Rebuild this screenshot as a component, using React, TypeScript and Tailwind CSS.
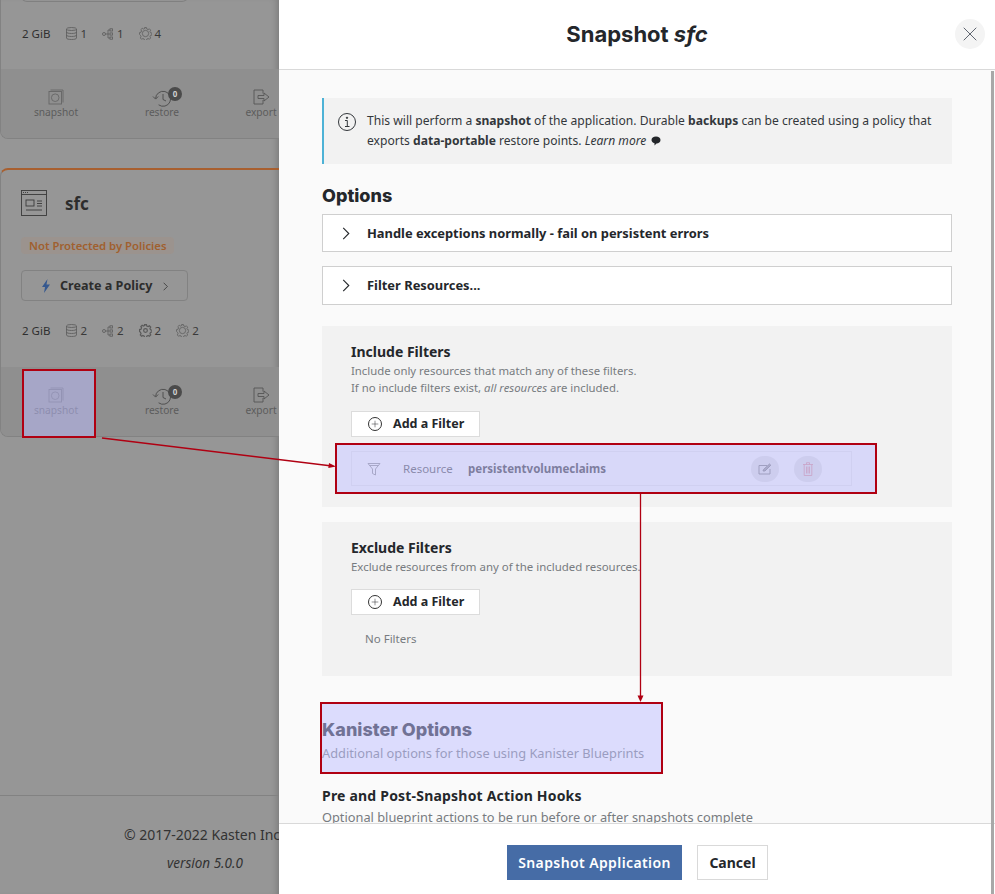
import { Plus, X } from "lucide-react";

const stroke = { fill: "none", stroke: "currentColor", strokeWidth: 0.9 };

function SnapshotIcon() {
  return (
    <svg width="16" height="16" viewBox="0 0 16 16" {...stroke}>
      <path d="M2.500 1h12.500v12.500" />
      <rect x="1" y="2.500" width="12.500" height="12.500" />
      <circle cx="7.200" cy="8.700" r="3.800" />
    </svg>
  );
}

function RestoreIcon() {
  return (
    <svg width="20" height="18" viewBox="0 0 20 18" {...stroke}>
      <path d="M3.600 9.500a7.500 7.500 0 1 1 3 6.300" />
      <path d="M1 7.500l2.600 2.600 2.600-2.600" />
      <path d="M11 5v5.500l3 1.500" />
    </svg>
  );
}

function ExportIcon() {
  return (
    <svg width="17" height="16" viewBox="0 0 17 16" {...stroke}>
      <path d="M10 4.500V1H1v14h9v-4" />
      <path d="M5 6.500h6V4l5 4-5 4V9.500H5z" />
    </svg>
  );
}

function DbIcon() {
  return (
    <svg width="11" height="13" viewBox="0 0 11 13" {...stroke} strokeWidth={0.8}>
      <path d="M.5 2v9c0 1 2.200 1.500 5 1.500s5-.5 5-1.500V2" />
      <ellipse cx="5.500" cy="2" rx="5" ry="1.500" />
      <path d="M.5 5c0 1 2.200 1.500 5 1.500s5-.5 5-1.500M.5 8c0 1 2.200 1.500 5 1.500s5-.5 5-1.500" />
    </svg>
  );
}

function TreeIcon() {
  return (
    <svg width="12" height="12" viewBox="0 0 12 12" {...stroke} strokeWidth={0.8}>
      <circle cx="2" cy="6" r="1.500" />
      <path d="M3.500 6h4M6 2v8M6 2h2M6 10h2" />
      <rect x="8" y=".8" width="2.400" height="2.200" />
      <rect x="8" y="4.900" width="2.400" height="2.200" />
      <rect x="8" y="9" width="2.400" height="2.200" />
    </svg>
  );
}

function GearIcon({ dark }: { dark?: boolean }) {
  return (
    <svg width="13" height="13" viewBox="0 0 14 14" {...stroke} strokeWidth={dark ? 1.3 : 0.8}>
      <path d="M6 .6h2l.4 1.600 1.400.6 1.400-.8 1.400 1.400-.8 1.400.6 1.400 1.600.4v2l-1.600.4-.6 1.400.8 1.400-1.400 1.400-1.400-.8-1.400.6-.4 1.600H6l-.4-1.600-1.400-.6-1.400.8-1.400-1.400.8-1.400-.6-1.400L.6 8V6l1.600-.4.6-1.400L2 2.800 3.400 1.400l1.400.8 1.400-.6z" />
      <circle cx="7" cy="7" r={dark ? 2 : 3.400} />
    </svg>
  );
}

function AppIcon() {
  return (
    <svg width="26" height="26" viewBox="0 0 26 26" {...stroke}>
      <rect x=".5" y=".5" width="25" height="25" />
      <path d="M.5 4.500h25M2 2.500h1M4 2.500h1M6 2.500h1" />
      <rect x="5" y="10" width="8" height="6" />
      <path d="M16 11h5M16 13.500h5M16 16h5M5 20h16" />
    </svg>
  );
}

function Chevron({ w, h }: { w: number; h: number }) {
  return (
    <svg width={w} height={h} viewBox="0 0 8 14" fill="none" stroke="currentColor" strokeWidth="1.200" className="shrink-0">
      <path d="M1 1l6 6-6 6" />
    </svg>
  );
}

function Stats({ items }: { items: { icon: React.ReactNode; n: number }[] }) {
  return (
    <div className="flex items-center text-[11.500px] text-[#2f2f2f]">
      <span className="mr-[16px]">2 GiB</span>
      {items.map((item, i) => (
        <span key={i} className="mr-[15px] flex items-center gap-[3px] text-[#3a3a3a]">
          <span className="flex text-[#5a5a5a]">{item.icon}</span>
          <span>{item.n}</span>
        </span>
      ))}
    </div>
  );
}

function ActionStrip() {
  return (
    <div className="flex h-[69px] bg-[#8f8f8f] text-[10.200px] text-[#5c5c5c]">
      <div className="flex w-[110px] flex-col items-center pt-[20px]">
        <span className="text-[#666]"><SnapshotIcon /></span>
        <span>snapshot</span>
      </div>
      <div className="relative flex w-[102px] flex-col items-center pt-[20px]">
        <span className="text-[#4a4a4a]"><RestoreIcon /></span>
        <span className="-mt-[2px]">restore</span>
        <span className="absolute left-[57px] top-[18px] flex h-[14px] w-[14px] items-center justify-center rounded-full bg-[#4b4b4b] text-[8px] font-bold text-[#cfcfcf]">
          0
        </span>
      </div>
      <div className="flex w-[67px] flex-col items-center pl-[29px] pt-[20px]">
        <span className="text-[#555]"><ExportIcon /></span>
        <span>export</span>
      </div>
    </div>
  );
}

function Background() {
  return (
    <div className="flex h-full w-[279px] shrink-0 flex-col overflow-hidden bg-[#969696] shadow-[inset_-6px_0_6px_-4px_rgba(0,0,0,0.18)]">
      {/* first card, cut off by the top of the window */}
      <div className="-mt-[4px] w-[300px] overflow-hidden rounded-bl-lg border-b border-l border-[#828282]">
        <div className="ml-[20px] h-[6px] w-[167px] rounded-b-md border border-t-0 border-[#808080]" />
        <div className="flex h-[67px] items-center pb-[4px] pl-[21px]">
          <Stats
            items={[
              { icon: <DbIcon />, n: 1 },
              { icon: <TreeIcon />, n: 1 },
              { icon: <GearIcon />, n: 4 },
            ]}
          />
        </div>
        <ActionStrip />
      </div>

      {/* sfc card */}
      <div className="mt-[29px] w-[300px] overflow-hidden rounded-tl-lg rounded-bl-lg border-b border-l border-t-2 border-[#828282] border-t-[#a85f2f]">
        <div className="pl-[20px] pt-[20px] text-[#3a3a3a]">
          <div className="flex items-center gap-[18px]">
            <AppIcon />
            <span className="pt-[1px] text-[17px] font-bold leading-[25px] text-[#2d2d2d]">sfc</span>
          </div>
          <div className="mt-[21px] w-fit rounded-sm bg-[#9b938e] px-[8px] text-[11.300px] font-semibold leading-[17px] text-[#a0602f]">
            Not Protected by Policies
          </div>
          <div className="mt-[16px] flex h-[31px] w-[167px] items-center rounded border border-[#828282] pl-[19px] pt-[1px] text-[12.600px] font-bold text-[#2d2d2d]">
            <svg width="10" height="14" viewBox="0 0 10 14" fill="#35588f" className="shrink-0">
              <path d="M6.500 0L1 8h3L3 14l6-8.500H5.500z" />
            </svg>
            <span className="ml-[9px]">Create a Policy</span>
            <span className="ml-[10px]"><Chevron w={5} h={9} /></span>
          </div>
          <div className="mb-[23px] ml-px mt-[21px] h-[22px]">
            <Stats
              items={[
                { icon: <DbIcon />, n: 2 },
                { icon: <TreeIcon />, n: 2 },
                { icon: <GearIcon dark />, n: 2 },
                { icon: <GearIcon />, n: 2 },
              ]}
            />
          </div>
        </div>
        <ActionStrip />
      </div>

      {/* page footer */}
      <div className="mt-auto h-[99px] w-[300px] border-t border-[#828282] pl-[124px] pt-[29px] text-[#333]">
        <div className="whitespace-nowrap text-[14px] leading-[20px]">© 2017-2022 Kasten Inc.</div>
        <div className="ml-[43px] mt-[8px] whitespace-nowrap text-[13.500px] italic leading-[20px]">version 5.0.0</div>
      </div>
    </div>
  );
}

function Accordion({ label, h }: { label: string; h: string }) {
  return (
    <div className={`flex ${h} items-center border border-[#cfcfcf] bg-white pl-[19px] text-[12.900px] font-bold text-[#24272b]`}>
      <Chevron w={8} h={13} />
      <span className="ml-[17px] pt-px">{label}</span>
    </div>
  );
}

function AddFilter() {
  return (
    <button className="flex h-[26px] w-[129px] items-center border border-[#dcdcdc] bg-white pl-[16px] text-[12.500px] font-bold text-[#24272b]">
      <span className="flex h-[14px] w-[14px] items-center justify-center rounded-full border border-[#333]">
        <Plus className="h-[10px] w-[10px]" strokeWidth={1.2} />
      </span>
      <span className="ml-[11px]">Add a Filter</span>
    </button>
  );
}

function FilterRow() {
  return (
    <div className="mt-[14px] flex h-[35px] w-[501px] items-center border border-[#e2e2e2] pl-[15px] text-[11.500px] text-[#555]">
      <svg width="14" height="14" viewBox="0 0 14 14" fill="none" stroke="#888" strokeWidth="0.9" className="shrink-0">
        <path d="M1 1.500h12L8.500 7v6l-3-1.500V7z" />
        <path d="M2.500 3.500h9" />
      </svg>
      <span className="ml-[22px] w-[50px] whitespace-nowrap">Resource</span>
      <span className="ml-[15px] w-[138px] whitespace-nowrap font-bold text-[#3d3d3d]">persistentvolumeclaims</span>
      <span className="ml-[145px] flex h-[26px] w-[28px] items-center justify-center rounded-full bg-[#dcdcdc]">
        <svg width="14" height="12" viewBox="0 0 14 12" fill="none" stroke="#777" strokeWidth="0.9">
          <path d="M9 2.500H1v8.500h11V6" />
          <path d="M5 8l.5-1.500L11.500 1l1.300 1.200L7 8z" fill="#999" />
        </svg>
      </span>
      <span className="ml-[15px] flex h-[26px] w-[28px] items-center justify-center rounded-full bg-[#dcdcdc]">
        <svg width="10" height="14" viewBox="0 0 10 14" fill="none" stroke="#d6868d" strokeWidth="0.8">
          <path d="M0 2.500h10M3.500 2.500V.7h3v1.800M1.200 2.500v11h7.600v-11M3.500 4.500v7M5 4.500v7M6.500 4.500v7" />
        </svg>
      </span>
    </div>
  );
}

function Modal() {
  return (
    <div className="relative flex h-full flex-1 flex-col bg-white text-[#24272b]">
      <header className="relative flex h-[70px] shrink-0 items-center justify-center border-b border-[#d9d9d9]">
        <h1 className="font-['Inter'] text-[22px] font-bold text-[#24272b]">
          Snapshot <em className="font-bold">sfc</em>
        </h1>
        <span className="absolute right-[10px] top-[19px] flex h-[30px] w-[30px] items-center justify-center rounded-full bg-[#f4f4f4] text-[#5f6570]">
          <X className="h-[24px] w-[24px]" strokeWidth={1} />
        </span>
      </header>

      <div className="min-h-0 flex-1 overflow-hidden bg-[#fafafa] pl-[43px] pr-[43px] pt-[28px]">
        <div className="flex h-[66px] items-start border-l-2 border-[#4db2d6] bg-[#f2f2f2] pl-[13px] pt-[13px] text-[12.100px] leading-[20px] text-[#33373b]">
          <svg width="20" height="20" viewBox="0 0 20 20" fill="none" stroke="#33373b" className="mt-[1px] shrink-0">
            <circle cx="10" cy="10" r="8.500" />
            <path d="M8 8.500h2.300v5.500M8 14.500h4.500" />
            <circle cx="10" cy="5.800" r=".7" fill="#33373b" />
          </svg>
          <p className="ml-[10px]">
            This will perform a <b>snapshot</b> of the application. Durable <b>backups</b> can be created using a policy that exports <b>data-portable</b> restore points. <i>Learn more</i>{" "}
            <svg width="10" height="10" viewBox="0 0 10 10" fill="#24272b" className="ml-[2px] inline-block align-[-1px]">
              <path d="M5 .5c2.700 0 4.500 1.500 4.500 3.500S7.700 7.500 5.500 7.500L3.500 9.500V7.200C1.700 6.800.5 5.500.5 4 .5 2 2.300.5 5 .5z" />
            </svg>
          </p>
        </div>

        <h2 className="mt-[20px] font-['Inter'] text-[18px] font-extrabold leading-[24px]">Options</h2>
        <div className="mt-[6px] flex flex-col gap-[14px]">
          <Accordion label="Handle exceptions normally - fail on persistent errors" h="h-[38px]" />
          <Accordion label="Filter Resources..." h="h-[39px]" />
        </div>

        <section className="mt-[21px] h-[181px] bg-[#f2f2f2] pl-[29px] pt-[17px]">
          <h3 className="text-[14px] font-bold leading-[18px]">Include Filters</h3>
          <p className="mt-[1px] text-[11.350px] leading-[17px] text-[#777b80]">
            Include only resources that match any of these filters.
            <br />
            If no include filters exist, <i>all resources</i> are included.
          </p>
          <div className="mt-[15px]"><AddFilter /></div>
          <FilterRow />
        </section>

        <section className="mt-[15px] h-[154px] bg-[#f2f2f2] pl-[29px] pt-[17px]">
          <h3 className="text-[14px] font-bold leading-[18px]">Exclude Filters</h3>
          <p className="mt-[1px] text-[11.450px] leading-[17px] text-[#777b80]">
            Exclude resources from any of the included resources.
          </p>
          <div className="mt-[14px]"><AddFilter /></div>
          <p className="ml-[14px] mt-[15px] text-[11.500px] text-[#777b80]">No Filters</p>
        </section>

        <h2 className="mt-[42px] font-['Inter'] text-[18px] font-extrabold leading-[24px] text-[#24272b]">Kanister Options</h2>
        <p className="mt-[1px] text-[12.800px] leading-[20px] text-[#777b80]">Additional options for those using Kanister Blueprints</p>
        <h3 className="mt-[23px] text-[14px] font-bold leading-[20px] tracking-[0.2px]">Pre and Post-Snapshot Action Hooks</h3>
        <p className="mt-[1px] text-[12.800px] leading-[20px] text-[#777b80]">Optional blueprint actions to be run before or after snapshots complete</p>
      </div>

      <footer className="flex h-[71px] shrink-0 items-center justify-center gap-[15px] border-t border-[#d9d9d9] pl-[1px] pt-[6px]">
        <button className="h-[35px] w-[175px] bg-[#466ca6] text-[14px] font-semibold tracking-[0.4px] text-white">Snapshot Application</button>
        <button className="h-[35px] w-[71px] border border-[#d9d9d9] bg-white text-[14px] font-bold text-[#24272b]">Cancel</button>
      </footer>

      {/* scrollbar thumb of the modal body */}
      <div className="absolute bottom-0 right-[1px] top-[71px] w-[3px] bg-[#a8a8a8]" />
    </div>
  );
}

export default function App() {
  const hl = "absolute border-2 border-[#b00012] bg-[rgba(190,190,255,0.5)]";
  return (
    <div className="relative flex h-screen w-full overflow-hidden font-['Noto_Sans',sans-serif]">
      <Background />
      <Modal />

      {/* annotations drawn over the screenshot */}
      <div className={`${hl} left-[22px] top-[369px] h-[69px] w-[74px]`} />
      <div className={`${hl} left-[335px] top-[443px] h-[51px] w-[542px]`} />
      <div className={`${hl} left-[320px] top-[702px] h-[72px] w-[343px]`} />
      <svg className="pointer-events-none absolute left-0 top-0" width="995" height="894" fill="none">
        <path d="M102 438L332 466" stroke="#b00012" strokeWidth="1.300" />
        <path d="M336 466.500l-7-3.500-.7 5z" fill="#b00012" />
        <path d="M640.500 494V697" stroke="#b00012" strokeWidth="1.300" />
        <path d="M640.500 702l-3-6.500h6z" fill="#b00012" />
      </svg>
    </div>
  );
}
